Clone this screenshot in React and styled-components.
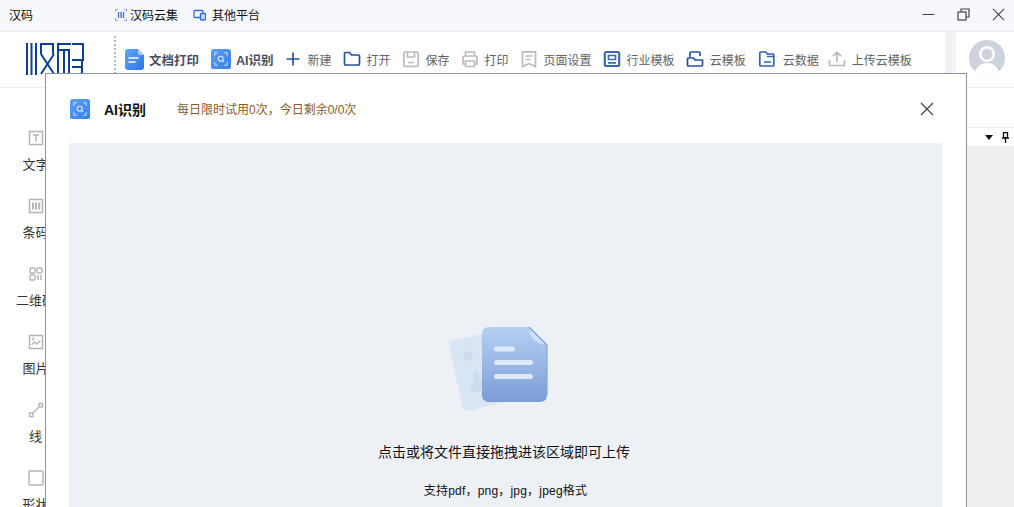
import React from 'react';
import styled, {createGlobalStyle} from 'styled-components';

const GlobalStyle = createGlobalStyle`
    html, body {
        margin: 0;
        height: 100%;
        overflow: hidden;
        background: #fff;
    }
    body {
        font-family: "Liberation Sans", "Noto Sans CJK SC", sans-serif;
        color: #222;
    }
`

const Page = styled.div`
    position: relative;
    width: 1014px;
    height: 507px;
    overflow: hidden;
    background: #fff;
`

const TitleBar = styled.div`
    height: 29px;
    display: flex;
    align-items: center;
    padding: 0 0 2px 9px;
    background: #f6f7fb;
    border-bottom: 1px solid #e9ebef;
    font-size: 12px;
    color: #111;
`

const AppName = styled.div`
    width: 106px;
`

const TitleLink = styled.div`
    display: flex;
    align-items: center;
    gap: ${p => p.$gap}px;
    margin-right: ${p => p.$space}px;
`

const WindowButtons = styled.div`
    margin-left: auto;
    display: flex;
    align-items: center;
    gap: 22px;
    padding-right: 9px;
    color: #444;
`

const ToolRow = styled.div`
    height: 55px;
    display: flex;
    border-bottom: 1px solid #eeeff2;
`

const LogoBox = styled.div`
    width: 114px;
    padding: 11px 0 0 26px;
    box-sizing: border-box;
`

const ToolBar = styled.div`
    width: 831px;
    height: 46px;
    margin-top: 4px;
    padding: 0 0 0 9px;
    box-sizing: border-box;
    display: flex;
    align-items: center;
    border-left: 2px dotted #b9b9b9;
`

const ToolItem = styled.div`
    display: flex;
    align-items: center;
    gap: ${p => p.$gap || 6}px;
    margin-right: ${p => p.$space ?? 11}px;
    font-size: ${p => (p.$bold ? 12.5 : 12)}px;
    font-weight: ${p => (p.$bold ? 700 : 400)};
    color: ${p => (p.$bold ? '#4a5060' : '#60646b')};
    white-space: nowrap;
`

const Divider = styled.div`
    width: 11px;
    height: 55px;
    background: #f2f2f2;
    border-radius: 4px 4px 0 0;
`

const UserBox = styled.div`
    flex: 1;
    display: flex;
    align-items: center;
    padding: 0 0 4px 13px;
`

const Avatar = styled.div`
    width: 36px;
    height: 36px;
    border-radius: 50%;
    background: #cdd3dd;
    overflow: hidden;
`

const Body = styled.div`
    display: flex;
    height: 419px;
`

const SideBar = styled.div`
    width: 71px;
    display: flex;
    flex-direction: column;
    padding-top: 42px;
    gap: 24px;
`

const SideItem = styled.div`
    display: flex;
    flex-direction: column;
    align-items: center;
    gap: 10px;
    width: 71px;
    font-size: 13px;
    line-height: 18px;
    color: #333;
    white-space: nowrap;
`

const RightPane = styled.div`
    flex: 1;
    margin-top: 39px;
    display: flex;
    flex-direction: column;
`

const PaneHead = styled.div`
    height: 18px;
    display: flex;
    align-items: center;
    justify-content: flex-end;
    gap: 9px;
    padding-right: 5px;
    border-top: 1px solid #eeeff2;
`

const Caret = styled.div`
    width: 0;
    height: 0;
    border-left: 4.5px solid transparent;
    border-right: 4.5px solid transparent;
    border-top: 5px solid #111;
`

const PaneBody = styled.div`
    flex: 1;
    background: #efefef;
`

const Modal = styled.div`
    position: absolute;
    left: 45px;
    top: 73px;
    width: 922px;
    height: 460px;
    box-sizing: border-box;
    background: #fff;
    border: 1px solid #8a94b0;
    display: flex;
    flex-direction: column;
    padding: 0 24px 0 23px;
`

const ModalHead = styled.div`
    height: 69px;
    padding-left: 1px;
    display: flex;
    align-items: center;
    flex-shrink: 0;
`

const ModalTitle = styled.div`
    margin-left: 14px;
    width: 73px;
    font-size: 14px;
    font-weight: 700;
    color: #111;
`

const Quota = styled.div`
    font-size: 12px;
    color: #8a5a2b;
`

const CloseBtn = styled.div`
    margin-left: auto;
    margin-right: 8px;
    display: flex;
    color: #444;
`

const DropZone = styled.div`
    flex: 1;
    background: #edf1f6;
    display: flex;
    flex-direction: column;
    align-items: center;
    padding: 184px 3px 0 0;
    color: #111;
`

const ArtWrap = styled.div`
    display: flex;
    margin-right: 13px;
`

const DropText = styled.div`
    margin-top: 30px;
    font-size: 14px;
    line-height: 20px;
`

const DropHint = styled.div`
    margin: 20px 0 0 3px;
    font-size: 12px;
    line-height: 18px;
    letter-spacing: 0.2px;
`

const AiIcon = ({id, size = 20}) => (
    <svg width={size} height={size} viewBox="0 0 21 21">
        <defs>
            <linearGradient id={id} x1="0" y1="0" x2="1" y2="1">
                <stop offset="0" stopColor="#5aa0f5"/>
                <stop offset="1" stopColor="#3a7fea"/>
            </linearGradient>
        </defs>
        <rect width="21" height="21" rx="3" fill={`url(#${id})`}/>
        <path d="M4 7V5q0-1 1-1h2M14 4h2q1 0 1 1v2M17 14v2q0 1-1 1h-2M7 17H5q-1 0-1-1v-2" fill="none" stroke="#cfe2fb" strokeWidth="1.1"/>
        <circle cx="10.2" cy="10.2" r="2.6" fill="none" stroke="#e4effd" strokeWidth="1.1"/>
        <path d="M12 12l1.6 1.6" stroke="#e4effd" strokeWidth="1.1"/>
    </svg>
);

const DocIcon = () => (
    <svg width="19" height="21" viewBox="0 0 19 21">
        <defs>
            <linearGradient id="printFill" x1="0" y1="0" x2="1" y2="1">
                <stop offset="0" stopColor="#62a8f6"/>
                <stop offset="1" stopColor="#2f72e6"/>
            </linearGradient>
        </defs>
        <path d="M3 0h10l6 6v12q0 3-3 3H3q-3 0-3-3V3q0-3 3-3z" fill="url(#printFill)"/>
        <path d="M13 0l6 6h-4q-2 0-2-2z" fill="#a9cdf8"/>
        <path d="M4 9h9M4 13h6" stroke="#fff" strokeWidth="1.6" strokeLinecap="round"/>
    </svg>
);

const BLUE = '#2450a0';
const GREY = '#bbbbbb';

const LineIcon = ({color, children}) => (
    <svg width="18" height="18" viewBox="0 0 18 18" fill="none" stroke={color} strokeWidth="1.7">{children}</svg>
);

const tools = [
    {label: '新建', color: BLUE, draw: <path d="M9 2.5v13M2.5 9h13"/>},
    {label: '打开', color: BLUE, draw: <path d="M1.5 3.5q0-1 1-1h4l2 2.5h7q1 0 1 1v8q0 1-1 1h-13q-1 0-1-1z"/>},
    {label: '保存', color: GREY, draw: <><rect x="1.8" y="2" width="14.4" height="14.4" rx="1.5"/><path d="M5.5 2v5h7V2M6 12.5h6"/></>},
    {label: '打印', color: GREY, draw: <><path d="M4.5 6V2h9v4M4.5 14H2V8q0-2 2-2h10q2 0 2 2v6h-2.5"/><path d="M4.5 11h9v5.5h-9z"/></>},
    {label: '页面设置', color: GREY, draw: <path d="M2.5 1.8h13v14.8l-6.5-3-6.5 3zM5.5 6h7M5.5 9.5h5"/>},
    {label: '行业模板', color: '#3f68ae', draw: <><rect x="1.8" y="2" width="14.4" height="14" rx="1.5" strokeWidth="2.2"/><path d="M5.500 5.500h7v4h-7zM5 12.800h8"/></>},
    {label: '云模板', color: BLUE, space: 12, draw: <><path d="M4 7V3q0-1 1-1h8q1 0 1 1v3"/><path d="M1.500 9q0-1 1-1h5l1.500 2h7.500v5q0 1-1 1h-13q-1 0-1-1z"/></>},
    {label: '云数据', color: '#3462ad', gap: 7, space: 9, draw: <><path d="M1.800 3q0-1 1-1h5l1.500 2h5.500q1 0 1 1v10q0 1-1 1h-12q-1 0-1-1z"/><path d="M9 6.500h7M6 12h7"/></>},
    {label: '上传云模板', color: GREY, space: 0, draw: <path d="M9 12V2.500M5 6l4-3.500L13 6M1.500 10v5.500h15V10"/>},
];

const sideItems = [
    {label: '文字', draw: <><rect x="1.500" y="1.500" width="13" height="13" strokeWidth="1.500"/><path d="M5 5h6M8 5v6.500" strokeWidth="1.500"/></>},
    {label: '条码', draw: <><rect x="1.500" y="1.500" width="13" height="13" strokeWidth="1.500"/><path d="M5 4.500v7M8 4.500v7M11.300 4.500v7" strokeWidth="2"/></>},
    {label: '二维码', draw: <><rect x="2" y="2" width="5" height="5" rx="1" strokeWidth="1.400"/><rect x="9" y="2" width="5" height="5" rx="1" strokeWidth="1.400"/><rect x="2" y="9" width="5" height="5" rx="1" strokeWidth="1.400"/><path d="M10 9v5M13 9v5" strokeWidth="1.500"/></>},
    {label: '图片', draw: <><rect x="1.500" y="1.500" width="13" height="13" strokeWidth="1.500"/><circle cx="5" cy="5" r="1" strokeWidth="1"/><path d="M3.500 11l3-3 2 2 4-3.500" strokeWidth="1.300"/></>},
    {label: '线', draw: <><rect x="1.500" y="11" width="3.500" height="3.500" strokeWidth="1.400"/><rect x="11" y="1.500" width="3.500" height="3.500" strokeWidth="1.400"/><path d="M5 11l6-6" strokeWidth="1.400"/></>},
    {label: '形状', draw: <rect x="1" y="1" width="14" height="14" rx="1" strokeWidth="1.500"/>},
];

const Logo = () => (
    <svg width="58" height="33" viewBox="0 0 58 33" fill="none" stroke="#0f3e92" strokeWidth="2">
        <path d="M1 0v32M5.500 0v32M10 0v32"/>
        <path d="M14 1h14M15 1v10M27 1v10M15 11l13 20M28 11L15 31"/>
        <path d="M45 1H32v31M38 7v25M32 7h11v25"/>
        <path d="M46 1h11v16H46M56 17v12q0 2-2 2h-7M46 24h10"/>
    </svg>
);

const UploadArt = () => (
    <svg width="100" height="85" viewBox="0 0 100 85">
        <defs>
            <linearGradient id="docFill" x1="0" y1="0" x2="0" y2="1">
                <stop offset="0" stopColor="#b6d0f3"/>
                <stop offset="1" stopColor="#7b9dd8"/>
            </linearGradient>
        </defs>
        <path d="M3 14l44-10q4-1 5 3l14 65-46 12q-4 1-5-3L1 18q-1-3 2-4z" fill="#d9e4f4"/>
        <circle cx="20" cy="29" r="5" fill="#cddbef"/>
        <path d="M28 42l-6 24 16-4z" fill="#cddbef"/>
        <path d="M41 0h40l18 18v50q0 7-7 7H41q-7 0-7-7V7q0-7 7-7z" fill="url(#docFill)"/>
        <path d="M81 0q0 16 18 18z" fill="#cfdff7"/>
        <path d="M81 0l18 18" stroke="#7b9dd8" strokeWidth="1.200"/>
        <path d="M99 18v50" stroke="#7b9dd8" strokeWidth="1"/>
        <rect x="46" y="19.500" width="21" height="5" rx="2.500" fill="#dfe8f7"/>
        <rect x="46" y="33" width="39" height="5" rx="2.500" fill="#dfe8f7"/>
        <rect x="46" y="47" width="39" height="5" rx="2.500" fill="#dfe8f7"/>
    </svg>
);

const App = () => (
    <Page>
        <GlobalStyle/>
        <TitleBar>
            <AppName>汉码</AppName>
            <TitleLink $gap={3} $space={15}>
                <svg width="12" height="12" viewBox="0 0 12 12" fill="none" stroke="#8aa6e0">
                    <path d="M.5 3V.5H3M9 .5h2.500V3M11.500 9v2.500H9M3 11.500H.5V9"/>
                    <path d="M3.500 3v6M6 3v6M8.500 3v6" strokeWidth="1.400" stroke="#4a6fc4"/>
                </svg>
                汉码云集
            </TitleLink>
            <TitleLink $gap={6} $space={0}>
                <svg width="13" height="12" viewBox="0 0 13 12" fill="none" stroke="#2f6be0" strokeWidth="1.300">
                    <rect x="1" y="1.500" width="9" height="7" rx="1"/>
                    <rect x="7.500" y="4.500" width="5" height="6.500" rx="1" fill="#cfdcf8"/>
                </svg>
                其他平台
            </TitleLink>
            <WindowButtons>
                <svg width="13" height="13" viewBox="0 0 13 13" stroke="currentColor"><path d="M.5 6.500h12"/></svg>
                <svg width="13" height="13" viewBox="0 0 13 13" fill="none" stroke="currentColor" strokeWidth="1.200"><rect x="1" y="4" width="8" height="8"/><path d="M4 4V1h8v8H9"/></svg>
                <svg width="13" height="13" viewBox="0 0 14 14" stroke="currentColor" strokeWidth="1.200"><path d="M1 1l12 12M13 1L1 13"/></svg>
            </WindowButtons>
        </TitleBar>
        <ToolRow>
            <LogoBox><Logo/></LogoBox>
            <ToolBar>
                <ToolItem $bold $gap={5} $space={12}><DocIcon/>文档打印</ToolItem>
                <ToolItem $bold $gap={5} $space={10}><AiIcon id="aiTool"/>AI识别</ToolItem>
                {tools.map(t => (
                    <ToolItem key={t.label} $gap={t.gap} $space={t.space}>
                        <LineIcon color={t.color}>{t.draw}</LineIcon>
                        {t.label}
                    </ToolItem>
                ))}
            </ToolBar>
            <Divider/>
            <UserBox>
                <Avatar>
                    <svg width="36" height="36" viewBox="0 0 36 36" fill="#fff">
                        <path fillRule="evenodd" d="M18 6a8 8 0 1 1 0 16 8 8 0 0 1 0-16zm0 2.500a5.500 5.500 0 1 0 0 11 5.500 5.500 0 0 0 0-11z"/>
                        <path d="M5 36c1-9 7-13 13-13s12 4 13 13z"/>
                    </svg>
                </Avatar>
            </UserBox>
        </ToolRow>
        <Body>
            <SideBar>
                {sideItems.map(s => (
                    <SideItem key={s.label}>
                        <svg width="16" height="16" viewBox="0 0 16 16" fill="none" stroke="#b5b5b5">{s.draw}</svg>
                        {s.label}
                    </SideItem>
                ))}
            </SideBar>
            <RightPane>
                <PaneHead>
                    <Caret/>
                    <svg width="7" height="11" viewBox="0 0 7 11" fill="none" stroke="#111" strokeWidth="1.300"><path d="M1.500.7h4v5h-4zM0 6h7M3.500 6v5"/></svg>
                </PaneHead>
                <PaneBody/>
            </RightPane>
        </Body>
        <Modal>
            <ModalHead>
                <AiIcon id="aiModal"/>
                <ModalTitle>AI识别</ModalTitle>
                <Quota>每日限时试用0次，今日剩余0/0次</Quota>
                <CloseBtn>
                    <svg width="14" height="14" viewBox="0 0 14 14" stroke="currentColor" strokeWidth="1.200"><path d="M1 1l12 12M13 1L1 13"/></svg>
                </CloseBtn>
            </ModalHead>
            <DropZone>
                <ArtWrap><UploadArt/></ArtWrap>
                <DropText>点击或将文件直接拖拽进该区域即可上传</DropText>
                <DropHint>支持pdf，png，jpg，jpeg格式</DropHint>
            </DropZone>
        </Modal>
    </Page>
);

export default App;
